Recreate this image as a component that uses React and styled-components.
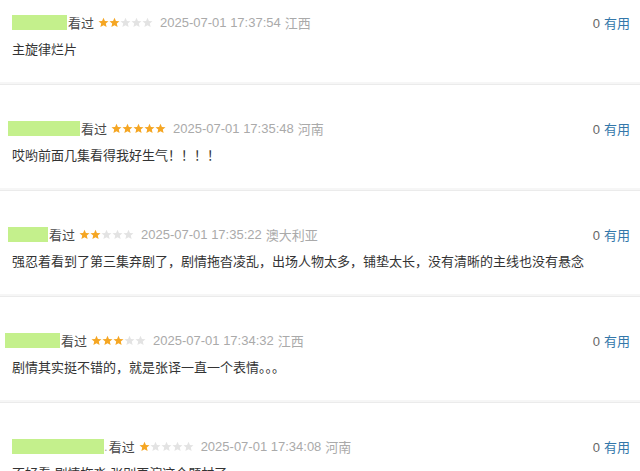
import React from "react";
import styled, { createGlobalStyle } from "styled-components";

const GlobalStyle = createGlobalStyle`
  html, body {
    margin: 0;
    padding: 0;
    background: #fff;
    overflow: hidden;
  }
  body {
    font-family: "Liberation Sans", Arial, "Noto Sans CJK SC", sans-serif;
  }
`;

const List = styled.div`
  width: 640px;
  margin-top: -21px;
`;

const Item = styled.div`
  padding: 34px 10px 26px 12px;
  border-bottom: 1px solid #ebebeb;
  box-shadow: 0 -2px 0 #f6f6f6 inset;
`;

const Header = styled.div`
  display: flex;
  align-items: center;
  justify-content: space-between;
  height: 18px;
`;

const Info = styled.div`
  display: flex;
  align-items: center;
  font-size: 13px;
  color: #494949;
`;

const Mask = styled.span`
  display: inline-block;
  width: ${(p) => p.w}px;
  height: 15px;
  margin-left: ${(p) => p.ml}px;
  background: #c4f08c;
`;

const Watched = styled.span`
  font-family: "Noto Sans CJK SC", sans-serif;
  margin-left: 1px;
`;

const Stars = styled.span`
  display: inline-flex;
  margin-left: 4px;
`;

const Time = styled.span`
  margin-left: 7px;
  font-size: 13px;
  color: #aaa;
`;

const Place = styled.span`
  margin-left: 4px;
  font-size: 13px;
  color: #aaa;
  font-family: "Noto Sans CJK SC", sans-serif;
`;

const Votes = styled.span`
  font-size: 13px;
  color: #666;
  font-family: "Liberation Sans", "Noto Sans CJK SC", sans-serif;
`;

const Useful = styled.span`
  margin-left: 4px;
  color: #3377aa;
`;

const Content = styled.p`
  margin: 9px 0 0;
  font-size: 13px;
  line-height: 18px;
  color: #333;
  font-family: "Noto Sans CJK SC", sans-serif;
  white-space: nowrap;
`;

const Star = ({ on }) => (
  <svg width="11" height="11" viewBox="0 0 24 24">
    <path
      d="M12 1.5l3.1 7.2 7.8.6-5.9 5.1 1.8 7.6L12 18l-6.8 4 1.8-7.6-5.9-5.1 7.8-.6z"
      fill={on ? "#f5a623" : "#e3e3e3"}
    />
  </svg>
);

const comments = [
  { ml: 0, w: 55, rating: 2, time: "2025-07-01 17:37:54", place: "江西", text: "主旋律烂片" },
  { ml: -4, w: 72, rating: 5, time: "2025-07-01 17:35:48", place: "河南", text: "哎哟前面几集看得我好生气！！！！" },
  { ml: -4, w: 40, rating: 2, time: "2025-07-01 17:35:22", place: "澳大利亚", text: "强忍着看到了第三集弃剧了，剧情拖沓凌乱，出场人物太多，铺垫太长，没有清晰的主线也没有悬念" },
  { ml: -7, w: 55, rating: 3, time: "2025-07-01 17:34:32", place: "江西", text: "剧情其实挺不错的，就是张译一直一个表情。。。" },
  { ml: 0, w: 92, dot: true, rating: 1, time: "2025-07-01 17:34:08", place: "河南", text: "不好看,剧情拖沓,张别再演这个题材了" },
];

export default function App() {
  return (
    <>
      <GlobalStyle />
      <List>
        {comments.map((c, i) => (
          <Item key={i}>
            <Header>
              <Info>
                <Mask w={c.w} ml={c.ml} />
                {c.dot && <span style={{ color: "#aaa" }}>.</span>}
                <Watched>{c.dot ? " 看过" : "看过"}</Watched>
                <Stars>
                  {[1, 2, 3, 4, 5].map((n) => (
                    <Star key={n} on={n <= c.rating} />
                  ))}
                </Stars>
                <Time>{c.time}</Time>
                <Place>{c.place}</Place>
              </Info>
              <Votes>
                0<Useful>有用</Useful>
              </Votes>
            </Header>
            <Content>{c.text}</Content>
          </Item>
        ))}
      </List>
    </>
  );
}
